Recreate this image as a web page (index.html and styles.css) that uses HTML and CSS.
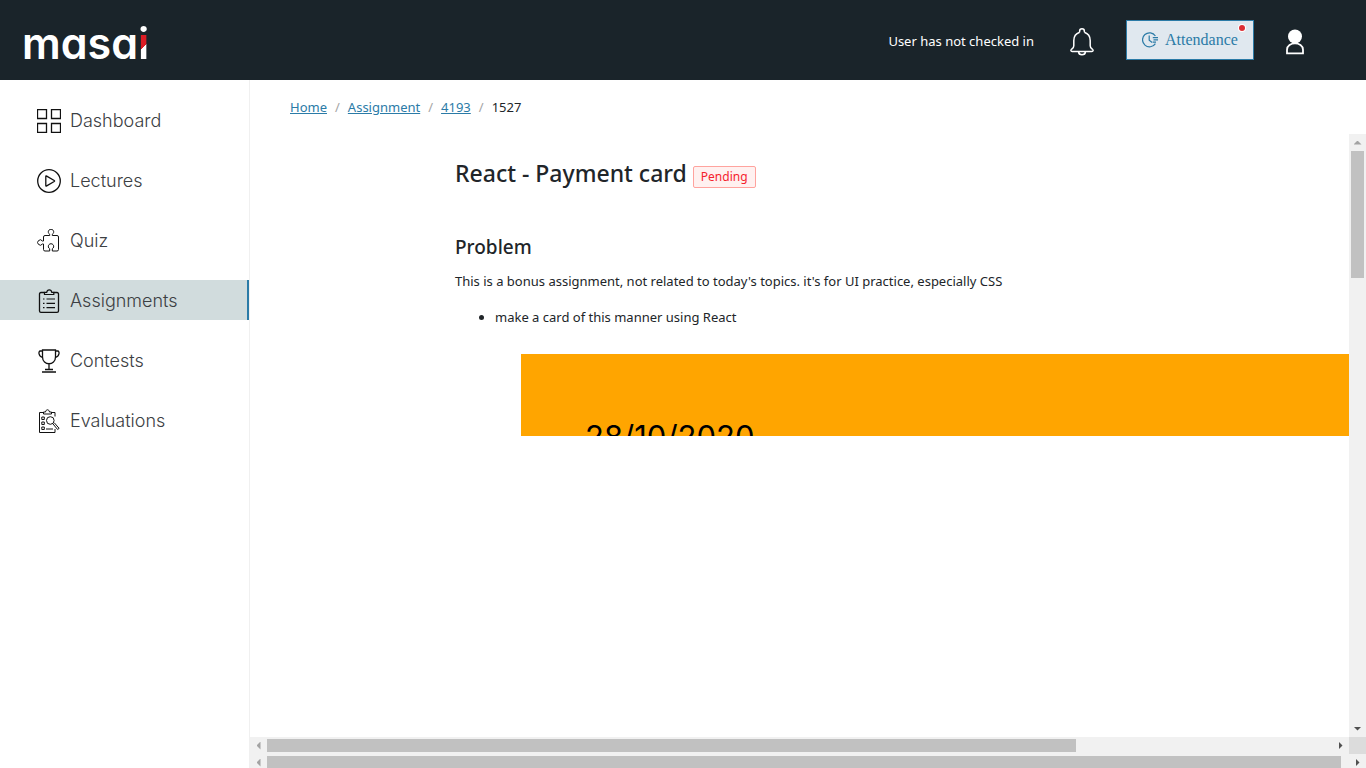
FILE: index.html
```html
<!DOCTYPE html>
<html lang="en">
<head>
<meta charset="utf-8">
<title>React - Payment card</title>
<link rel="stylesheet" href="styles.css">
</head>
<body>
<header class="topbar">
  <a class="logo" href="#">masa<span class="logo-i">i</span></a>
  <div class="top-actions">
    <span class="status">User has not checked in</span>
    <button class="icon-button" aria-label="Notifications">
      <svg width="24" height="28" viewBox="0 0 24 28" fill="none" stroke="#fff" stroke-width="1.5"><path d="M9.6 4.3V3.2a2.4 2.4 0 0 1 4.8 0v1.1M9.6 4.2C5.900 5.500 3.800 8.700 3.800 12.500v5.200c0 1.500-.8 2.600-2 3.300-1.500 1-.9 2.400.3 2.400h19.800c1.200 0 1.800-1.400.3-2.400-1.200-.7-2-1.800-2-3.300v-5.200c0-3.800-2.100-7-5.800-8.300M8.500 23.600c.3 4.200 6.700 4.200 7 0"/></svg>
    </button>
    <button class="attendance">
      <svg width="16" height="16" viewBox="0 0 16 16" fill="none" stroke="#2b7ba7" stroke-width="1.200"><path d="M13.400 4A7 7 0 1 0 13.400 11.600M7.200 3.500v4.700l3 2.200M10.800 5.600H16M11.500 7.900H16M10.800 10.100H14"/></svg>
      <span>Attendance</span>
      <span class="dot"></span>
    </button>
    <button class="icon-button" aria-label="Profile">
      <svg width="20" height="26" viewBox="0 0 20 26"><circle cx="10" cy="7.500" r="7" fill="#fff"/><path d="M2 24.300v-3.500c0-8.500 16-8.500 16 0v3.500z" fill="none" stroke="#fff" stroke-width="1.800"/></svg>
    </button>
  </div>
</header>
<div class="shell">
  <nav class="sidebar">
    <a class="nav-item" href="#"><svg class="nav-icon" viewBox="0 0 24 24"><path d="M.5.5h9v9h-9zM14.500.5h9v9h-9zM.5 14.500h9v9h-9zM14.500 14.500h9v9h-9z"/></svg>Dashboard</a>
    <a class="nav-item" href="#"><svg class="nav-icon" viewBox="0 0 24 24"><circle cx="12" cy="12" r="11.300"/><path d="M8.800 7.500v9q0 .9.900.4l7.500-4.400q.8-.5 0-1L9.700 7.100q-.9-.5-.9.400z"/></svg>Lectures</a>
    <a class="nav-item" href="#"><svg class="nav-icon thin" viewBox="0 0 24 24"><path d="M6.500 12V8q0-1.500 1.500-1.500h4.700V5.300a2.700 2.700 0 1 1 2.600 0v1.200H20q1.500 0 1.500 1.500v12.500q0 1.500-1.500 1.500h-4.700v-2.200a2.700 2.700 0 1 0-2.600 0V22H8q-1.500 0-1.500-1.500V15H5.400a2.600 2.600 0 1 1 0-3z"/></svg>Quiz</a>
    <a class="nav-item active" href="#" aria-current="page"><svg class="nav-icon" viewBox="0 0 24 24"><path d="M7.500 3.500H4q-1.500 0-1.500 1.500v17q0 1.300 1.500 1.300h16q1.500 0 1.500-1.300V5q0-1.500-1.500-1.500h-3.500"/><path stroke-width="1.200" d="M7.500 5.500V3.300h2.200c.5-3.200 4.600-3.200 5.100 0h2v2.200zM6 10h1.500M9.500 10H18M6 14.300h1.500M9.500 14.300H18M6 18.700h1.500M9.500 18.700H18"/></svg>Assignments</a>
    <a class="nav-item" href="#"><svg class="nav-icon" viewBox="0 0 24 24"><path d="M5.500 1h13v7c0 9-13 9-13 0zM5.500 2H3.300C1 2 1.500 7.700 5.700 8.500M18.500 2h2.200C23 2 22.500 7.700 18.300 8.500M12 15v5.500M8 20.500h8M5 23h14"/></svg>Contests</a>
    <a class="nav-item" href="#"><svg class="nav-icon thin" viewBox="0 0 24 24"><path d="M6 3.500H2.500v20H18V20M14.500 3.500H18v4M6.500 5V3h2c.5-3 3.500-3 4 0h2v2zM4.800 8h2.500v2.500H4.800zM4.800 13h2.500v2.500H4.800zM4.800 18h2.500v2.500H4.800zM9 20h7"/><circle cx="13.300" cy="11.500" r="3.800"/><path d="M15.800 14.700l4.800 5.800 1.500-1.200-4.900-5.600"/></svg>Evaluations</a>
  </nav>
  <main class="content">
    <nav class="breadcrumb" aria-label="Breadcrumb"><a href="#">Home</a><i>/</i><a href="#">Assignment</a><i>/</i><a href="#">4193</a><i>/</i><span>1527</span></nav>
    <div class="viewport">
      <article class="assignment">
        <div class="title-row"><h1>React - Payment card</h1><span class="tag">Pending</span></div>
        <h2>Problem</h2>
        <p>This is a bonus assignment, not related to today's topics. it's for UI practice, especially CSS</p>
        <ul><li>make a card of this manner using React</li></ul>
        <div class="card-preview">28/10/2020</div>
      </article>
      <div class="vbar"><span class="arrow up"></span><span class="vthumb"></span><span class="arrow down"></span></div>
    </div>
    <div class="hbar"><span class="arrow left"></span><span class="track"><span class="thumb inner"></span></span><span class="arrow right"></span><span class="corner"></span></div>
    <div class="hbar outer"><span class="arrow left"></span><span class="track"><span class="thumb"></span></span><span class="arrow right"></span></div>
  </main>
</div>
</body>
</html>
```
FILE: styles.css
```css
* { box-sizing: border-box; }
body { margin: 0; height: 100vh; display: flex; flex-direction: column; overflow: hidden; background: #fff; color: #212529; font: 14px/22px "Noto Sans", sans-serif; }
button { border: 0; padding: 0; background: none; cursor: pointer; }
svg { display: block; flex: none; }

.topbar { flex: none; height: 80px; background: #1a242a; color: #fff; display: flex; align-items: center; justify-content: space-between; padding: 0 59px 0 22px; }
.logo { color: #fff; text-decoration: none; font: 600 43px/64px Inter, sans-serif; font-feature-settings: "cv11"; padding-top: 5px; }
.logo-i { color: transparent; background: linear-gradient(#fff, #fff) 0 0 / 100% 17px no-repeat, linear-gradient(135deg, #dc1c24 40%, #fff 40%) 0 17px / 100% 36px no-repeat; background-clip: text; -webkit-background-clip: text; }
.top-actions { display: flex; align-items: center; }
.status { font-size: 13px; margin-right: 36px; padding-top: 2px; }
.icon-button { width: 24px; display: flex; justify-content: center; padding-top: 3px; }
.attendance { position: relative; margin: 0 29px 0 32px; width: 128px; height: 40px; border: 1px solid #2b7ba7; background: #e0e8ef; color: #2b7ba7; display: flex; align-items: center; justify-content: center; gap: 7px; font: 16px "Liberation Serif", serif; }
.dot { position: absolute; top: 4px; right: 8px; width: 6px; height: 6px; border-radius: 50%; background: #dc2f35; box-shadow: 0 0 0 1px #fff; }

.shell { flex: 1; min-height: 0; display: flex; }
.sidebar { flex: none; width: 250px; border-right: 1px solid #f0f0f0; padding-top: 20px; display: flex; flex-direction: column; gap: 20px; }
.nav-item { height: 40px; padding: 2px 0 0 37px; display: flex; align-items: center; gap: 9px; color: #3c4043; text-decoration: none; font: 300 18px/38px Inter, sans-serif; }
.nav-item.active { background: #d1dcdd; border-right: 2px solid #2b7ba7; }
.nav-icon { width: 24px; height: 24px; fill: none; stroke: #111; stroke-width: 1.3; }
.nav-icon.thin { stroke-width: 1; }

.content { flex: 1; min-width: 0; display: flex; flex-direction: column; }
.breadcrumb { flex: none; height: 54px; padding: 16px 40px 0; display: flex; gap: 8px; font-size: 13px; }
.breadcrumb a { color: #2b7ba7; }
.breadcrumb i { font-style: normal; color: #a5a5a5; }
.viewport { flex: 1; min-height: 0; display: flex; }
.assignment { flex: 1; min-width: 0; padding: 19px 0 0 205px; overflow: hidden; }
.title-row { display: flex; align-items: center; gap: 6px; margin-bottom: 41px; }
h1 { margin: 0; font-size: 23px; line-height: 40px; font-weight: 500; }
.tag { margin-top: 8px; padding: 0 7px; font-size: 12px; line-height: 20px; color: #f5222d; background: #fff1f0; border: 1px solid #ffa39e; border-radius: 2px; }
h2 { margin: 0 0 10px; font-size: 19px; line-height: 26px; font-weight: 500; }
p { margin: 0 0 14px; font-size: 13px; }
ul { margin: 0 0 26px; padding-left: 40px; font-size: 13px; }
.card-preview { margin-left: 66px; height: 82px; padding: 61px 64px 0; overflow: hidden; background: orange; color: #000; font: 31px/44px Inter, sans-serif; }

.vbar { flex: none; width: 17px; background: #f1f1f1; display: flex; flex-direction: column; align-items: center; }
.vthumb { width: 13px; height: 127px; background: #c1c1c1; }
.arrow { flex: none; width: 17px; height: 17px; display: grid; place-items: center; }
.arrow::before { content: ""; width: 8px; height: 4px; background: #505050; clip-path: polygon(0 0, 100% 0, 50% 100%); }
.up::before { background: #a3a3a3; clip-path: polygon(50% 0, 100% 100%, 0 100%); }
.down { margin-top: auto; }
.left::before { width: 4px; height: 8px; background: #a3a3a3; clip-path: polygon(100% 0, 100% 100%, 0 50%); }
.right::before { width: 4px; height: 8px; clip-path: polygon(0 0, 100% 50%, 0 100%); }
.hbar { flex: none; height: 17px; background: #f1f1f1; display: flex; align-items: center; }
.outer { height: 14px; align-items: flex-start; }
.track { flex: 1; display: flex; }
.thumb { flex: 1; height: 13px; background: #c1c1c1; }
.thumb.inner { flex: none; width: 76%; }
.outer .track { padding: 2px 8px 0 0; }
.corner { width: 17px; height: 17px; background: #dcdcdc; }
```
